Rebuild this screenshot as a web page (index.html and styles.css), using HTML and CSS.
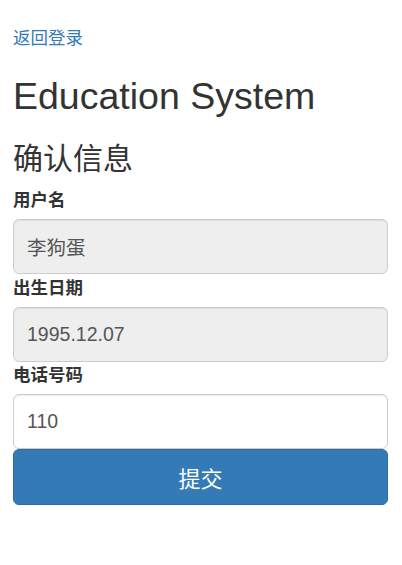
FILE: index.html
```html
<!DOCTYPE html>
<html lang="zh-CN">
<head>
<meta charset="utf-8">
<title>Education System</title>
<link rel="stylesheet" href="styles.css">
</head>
<body>
<div class="container">
  <a class="back-link" href="#">返回登录</a>
  <h1 class="title">Education System</h1>
  <h3 class="subtitle">确认信息</h3>
  <form class="form">
    <label class="label">用户名</label>
    <input class="field field-readonly" type="text" value="李狗蛋" readonly>
    <label class="label">出生日期</label>
    <input class="field field-readonly" type="text" value="1995.12.07" readonly>
    <label class="label">电话号码</label>
    <input class="field" type="text" value="110">
    <button class="submit" type="button">提交</button>
  </form>
</div>
</body>
</html>
```

FILE: styles.css
```css
* { box-sizing: border-box; }
html, body { margin: 0; padding: 0; background: #fff; }
body {
  font-family: "Liberation Sans", Arial, "Noto Sans CJK SC", sans-serif;
  font-size: 17.5px;
  line-height: 25px;
  color: #333;
}
.container {
  padding: 26px 14px 0 13px;
}
.back-link {
  display: block;
  color: #337ab7;
  text-decoration: none;
  line-height: 25px;
}
.title {
  margin: 25px 0 0;
  font-size: 37.5px;
  font-weight: 400;
  line-height: 41.25px;
  color: #333;
}
.subtitle {
  margin: 25px 0 0;
  font-size: 30px;
  font-weight: 400;
  line-height: 33px;
  color: #333;
}
.form {
  display: flex;
  flex-direction: column;
  margin-top: 13px;
}
.label {
  display: block;
  font-weight: 700;
  line-height: 25px;
  margin: 1.5px 0 6px;
}
.label:first-child { margin-top: 0; }
.field {
  display: block;
  width: 100%;
  height: 55px;
  padding: 0 13px;
  font-family: "Liberation Sans", Arial, "Noto Sans CJK SC", sans-serif;
  font-size: 19.5px;
  color: #555;
  background: #fff;
  border: 1px solid #ccc;
  border-radius: 6px;
  box-shadow: inset 0 1px 1px rgba(0,0,0,.075);
  outline: none;
}
.field-readonly { background: #eee; }
.submit {
  display: block;
  width: 100%;
  height: 56px;
  margin: 0;
  padding: 0;
  font-family: "Liberation Sans", Arial, "Noto Sans CJK SC", sans-serif;
  font-size: 22px;
  color: #fff;
  background: #337ab7;
  border: 1px solid #2e6da4;
  border-radius: 6px;
}
```
